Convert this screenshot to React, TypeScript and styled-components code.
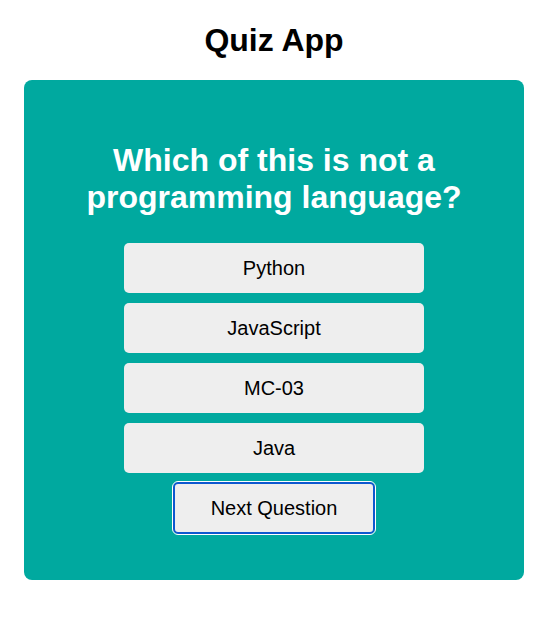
import styled, { createGlobalStyle } from "styled-components";

const GlobalStyle = createGlobalStyle`
  body {
    margin: 0;
    background: #ffffff;
    font-family: "Liberation Sans", Arial, sans-serif;
  }
`;

const Page = styled.div`
  width: 548px;
  display: flex;
  flex-direction: column;
  align-items: center;
  padding-top: 22px;
`;

const Title = styled.h1`
  margin: 0 0 21px;
  font-size: 32px;
  font-weight: 700;
  color: #000000;
`;

const Card = styled.div`
  width: 500px;
  height: 500px;
  box-sizing: border-box;
  background: #00a99f;
  border-radius: 8px;
  display: flex;
  flex-direction: column;
  align-items: center;
  padding-top: 62px;
`;

const Question = styled.h2`
  margin: 0 0 27px;
  font-size: 32px;
  font-weight: 700;
  color: #ffffff;
  text-align: center;
  width: 420px;
`;

const Options = styled.div`
  display: flex;
  flex-direction: column;
  gap: 10px;
`;

const Option = styled.button`
  width: 300px;
  height: 50px;
  border: none;
  border-radius: 5px;
  background: #eeeeee;
  color: #000000;
  font-family: "Liberation Sans", Arial, sans-serif;
  font-size: 20px;
  cursor: pointer;
`;

const NextButton = styled.button`
  margin-top: 9px;
  width: 202px;
  height: 52px;
  box-sizing: border-box;
  border: 2px solid #0d58cf;
  border-radius: 5px;
  outline: 1px solid #ffffff;
  background: #eeeeee;
  color: #000000;
  font-family: "Liberation Sans", Arial, sans-serif;
  font-size: 20px;
  cursor: pointer;
`;

const answers = ["Python", "JavaScript", "MC-03", "Java"];

const App = () => {
  return (
    <>
      <GlobalStyle />
      <Page>
        <Title>Quiz App</Title>
        <Card>
          <Question>Which of this is not a programming language?</Question>
          <Options>
            {answers.map((a) => (
              <Option key={a}>{a}</Option>
            ))}
          </Options>
          <NextButton>Next Question</NextButton>
        </Card>
      </Page>
    </>
  );
};

export default App;
